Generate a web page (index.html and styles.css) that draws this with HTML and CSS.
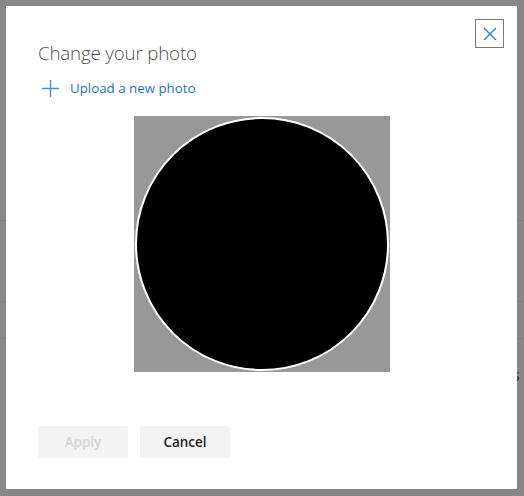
FILE: index.html
```html
<!DOCTYPE html>
<html>
<head>
<meta charset="utf-8">
<link rel="stylesheet" href="styles.css">
</head>
<body>
<div class="backdrop">
  <span class="bg-line l1"></span>
  <span class="bg-line l2"></span>
  <span class="bg-line l3"></span>
  <span class="bg-text">s</span>
</div>
<div class="dialog">
  <button class="close" aria-label="Close">
    <svg width="14" height="14" viewBox="0 0 14 14"><path d="M1 1 L13 13 M13 1 L1 13" stroke="#1a7fd8" stroke-width="1.3" fill="none"/></svg>
  </button>
  <h1 class="title">Change your photo</h1>
  <a class="upload" href="#">
    <svg class="plus" width="17" height="17" viewBox="0 0 17 17"><path d="M8.5 0 V17 M0 8.5 H17" stroke="#4a90d0" stroke-width="1.4" fill="none"/></svg>
    <span>Upload a new photo</span>
  </a>
  <div class="photo-wrap">
    <div class="photo">
      <div class="circle"></div>
    </div>
  </div>
  <div class="actions">
    <button class="btn disabled">Apply</button>
    <button class="btn">Cancel</button>
  </div>
</div>
</body>
</html>
```
FILE: styles.css
```css
html, body {
  margin: 0;
  padding: 0;
  width: 524px;
  height: 496px;
  overflow: hidden;
  background: #878787;
  font-family: "Open Sans", "Noto Sans", sans-serif;
}
.backdrop {
  position: absolute;
  inset: 0;
}
.bg-line {
  position: absolute;
  left: 0;
  right: 0;
  height: 1px;
  background: #7f7f7f;
}
.l1 { top: 220px; }
.l2 { top: 301px; }
.l3 { top: 338px; }
.bg-text {
  position: absolute;
  left: 512px;
  top: 364px;
  font-size: 16px;
  color: #2a2a2a;
}
.dialog {
  position: absolute;
  left: 6px;
  top: 6px;
  width: 511px;
  height: 483px;
  background: #fff;
  box-sizing: border-box;
  padding: 34px 32px 0 32px;
  display: flex;
  flex-direction: column;
}
.close {
  position: absolute;
  right: 13px;
  top: 13px;
  width: 29px;
  height: 29px;
  border: 1px solid #7a7a7a;
  background: #fff;
  padding: 0;
  display: flex;
  align-items: center;
  justify-content: center;
}
.title {
  margin: 0;
  font-size: 18.8px;
  font-weight: 300;
  color: #505050;
  line-height: 26px;
  letter-spacing: -0.2px;
}
.upload {
  margin-top: 13px;
  display: flex;
  align-items: center;
  gap: 11px;
  padding-left: 4px;
  text-decoration: none;
  color: #1a73c8;
  font-size: 13.3px;
  line-height: 18px;
  height: 18px;
}
.plus { flex: none; }
.photo-wrap {
  margin-top: 19px;
  display: flex;
  justify-content: center;
}
.photo {
  width: 256px;
  height: 256px;
  background: #989898;
  display: flex;
  align-items: center;
  justify-content: center;
}
.circle {
  width: 250px;
  height: 250px;
  border-radius: 50%;
  background: #000;
  border: 2px solid #fff;
}
.actions {
  margin-top: 54px;
  display: flex;
  gap: 12px;
}
.btn {
  width: 90px;
  height: 32px;
  border: none;
  border-radius: 2px;
  background: #f3f3f3;
  font-family: "Open Sans", "Noto Sans", sans-serif;
  font-size: 13.5px;
  font-weight: 600;
  color: #1e1e1e;
  padding: 0;
}
.btn.disabled {
  color: #d2d2d2;
}
```
